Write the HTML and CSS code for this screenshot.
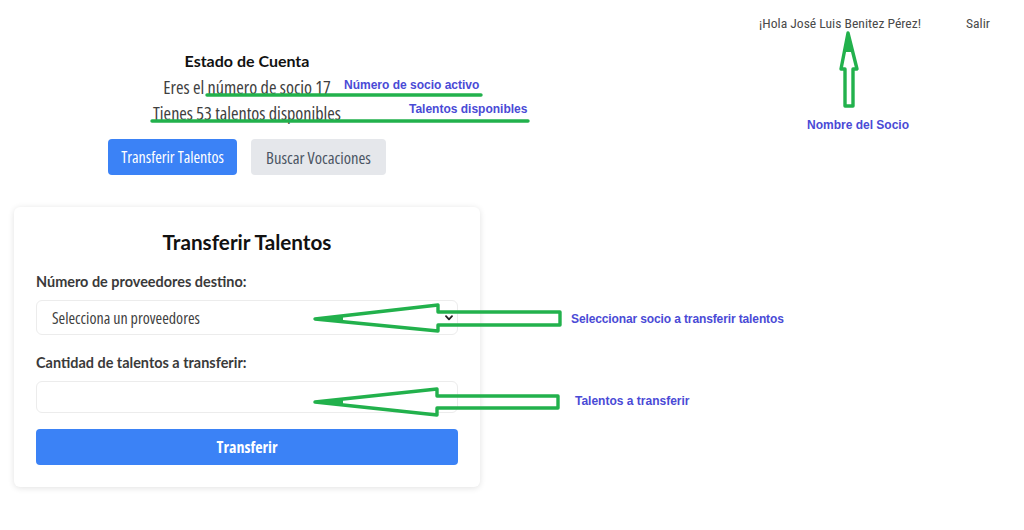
FILE: index.html
```html
<!DOCTYPE html>
<html lang="es">
<head>
<meta charset="utf-8">
<title>Estado de Cuenta</title>
<link rel="stylesheet" href="styles.css">
</head>
<body>
<header class="topbar">
  <span class="greet">¡Hola José Luis Benitez Pérez!</span>
  <a class="logout" href="#">Salir</a>
</header>
<main class="main">
  <section class="account">
    <h2 class="account-title">Estado de Cuenta</h2>
    <p class="account-line">Eres el número de socio 17</p>
    <p class="account-line">Tienes 53 talentos disponibles</p>
    <div class="actions">
      <button class="btn btn-primary">Transferir Talentos</button>
      <button class="btn btn-muted">Buscar Vocaciones</button>
    </div>
  </section>
  <section class="card">
    <h3 class="card-title">Transferir Talentos</h3>
    <label class="field-label">Número de proveedores destino:</label>
    <div class="field select">
      <span>Selecciona un proveedores</span>
      <svg class="chev" width="8" height="6" viewBox="0 0 8 6"><path d="M1 1.2 L4 4.4 L7 1.2" fill="none" stroke="#222" stroke-width="1.8" stroke-linecap="round" stroke-linejoin="round"/></svg>
    </div>
    <label class="field-label">Cantidad de talentos a transferir:</label>
    <div class="field input"></div>
    <button class="btn-block">Transferir</button>
  </section>
</main>

<div class="annotations">
  <svg class="anno-svg" width="1024" height="530" viewBox="0 0 1024 530">
    <g fill="none" stroke="#22b14c" stroke-width="3.4" stroke-linejoin="round" stroke-linecap="round">
      <line x1="207" y1="95" x2="481" y2="95"/>
      <line x1="152" y1="121" x2="528" y2="121"/>
      <polygon points="848,33 857,69 853,69 853,106 845,106 845,69 841,69"/>
      <polygon points="315,319 438,305 438,312 560,312 560,325 438,325 438,331"/>
      <polygon points="315,402 437,389 437,396 558,396 558,408 437,408 437,415"/>
    </g>
    <g fill="#22b14c">
      <polygon points="848,33 844.5,52 851.5,52"/>
      <polygon points="315,319 343,315.5 343,322.5"/>
      <polygon points="315,402 343,398.5 343,405.5"/>
    </g>
  </svg>
  <span class="anno anno-socio">Número de socio activo</span>
  <span class="anno anno-talentos">Talentos disponibles</span>
  <span class="anno anno-nombre">Nombre del Socio</span>
  <span class="anno anno-select">Seleccionar socio a transferir talentos</span>
  <span class="anno anno-input">Talentos a transferir</span>
</div>
</body>
</html>
```
FILE: styles.css
```css
* { box-sizing: border-box; }
html, body { margin: 0; padding: 0; background: #fff; }
body {
  width: 1024px;
  height: 530px;
  overflow: hidden;
  position: relative;
  font-family: "Open Sans", sans-serif;
  font-stretch: 75%;
  color: #3f3f3f;
}
.topbar {
  display: flex;
  justify-content: flex-end;
  align-items: center;
  gap: 45px;
  padding: 14px 34px 0 0;
  font-family: Roboto, sans-serif;
  font-size: 13.6px;
  line-height: 18px;
  color: #4a4a4a;
}
.logout { color: #4a4a4a; text-decoration: none; }
.main {
  margin-left: 14px;
  width: 466px;
  display: flex;
  flex-direction: column;
}
.account {
  margin-top: 16px;
  text-align: center;
}
.account-title {
  margin: 0;
  font-family: Lato, sans-serif;
  font-size: 16px;
  line-height: 26px;
  font-weight: 700;
  color: #111;
}
.account-line {
  margin: 0;
  font-size: 18.2px;
  line-height: 26px;
  color: #3f3f3f;
}
.actions {
  display: flex;
  justify-content: center;
  gap: 14px;
  margin-top: 13px;
}
.btn {
  height: 36px;
  border: none;
  border-radius: 4px;
  padding: 0 6px;
  font-family: inherit;
  font-stretch: 75%;
  font-size: 16px;
  white-space: nowrap;
}
.btn-primary { background: #3b82f6; color: #fff; width: 129px; }
.btn-muted { background: #e5e7eb; color: #4b5563; width: 135px; font-size: 16.6px; }
.card {
  margin-top: 32px;
  padding: 22px;
  background: #fff;
  border-radius: 6px;
  box-shadow: 0 1px 6px rgba(0,0,0,0.12);
  display: flex;
  flex-direction: column;
}
.card-title {
  margin: 0;
  text-align: center;
  font-family: Lato, sans-serif;
  font-size: 20.7px;
  line-height: 26px;
  font-weight: 700;
  color: #111;
}
.field-label {
  margin-top: 18px;
  font-family: Lato, sans-serif;
  font-size: 14.45px;
  line-height: 18px;
  font-weight: 700;
  color: #3a3a3a;
}
.field-label + .field { margin-top: 9px; }
.field {
  border: 1px solid #ececec;
  border-radius: 6px;
  background: #fff;
}
.select {
  height: 35px;
  display: flex;
  align-items: center;
  justify-content: space-between;
  padding: 0 4px 0 15px;
  font-size: 16px;
  color: #3f3f3f;
}
.input { height: 32px; }
.select + .field-label { margin-top: 19px; }
.btn-block {
  margin-top: 16px;
  height: 36px;
  border: none;
  border-radius: 4px;
  background: #3b82f6;
  color: #fff;
  font-family: inherit;
  font-stretch: 75%;
  font-size: 16px;
  font-weight: 700;
}
.annotations {
  position: absolute;
  left: 0;
  top: 0;
  width: 1024px;
  height: 530px;
  pointer-events: none;
}
.anno-svg { position: absolute; left: 0; top: 0; }
.anno {
  position: absolute;
  font-family: "Liberation Sans", Arial, sans-serif;
  font-stretch: 100%;
  font-weight: 700;
  font-size: 12px;
  line-height: 14px;
  color: #4a4ad6;
  white-space: nowrap;
}
.anno-select { letter-spacing: -0.12px; }
.anno-socio { left: 344px; top: 78px; }
.anno-talentos { left: 409px; top: 102px; }
.anno-nombre { left: 807px; top: 118px; }
.anno-select { left: 571px; top: 312px; }
.anno-input { left: 575px; top: 394px; }
```
